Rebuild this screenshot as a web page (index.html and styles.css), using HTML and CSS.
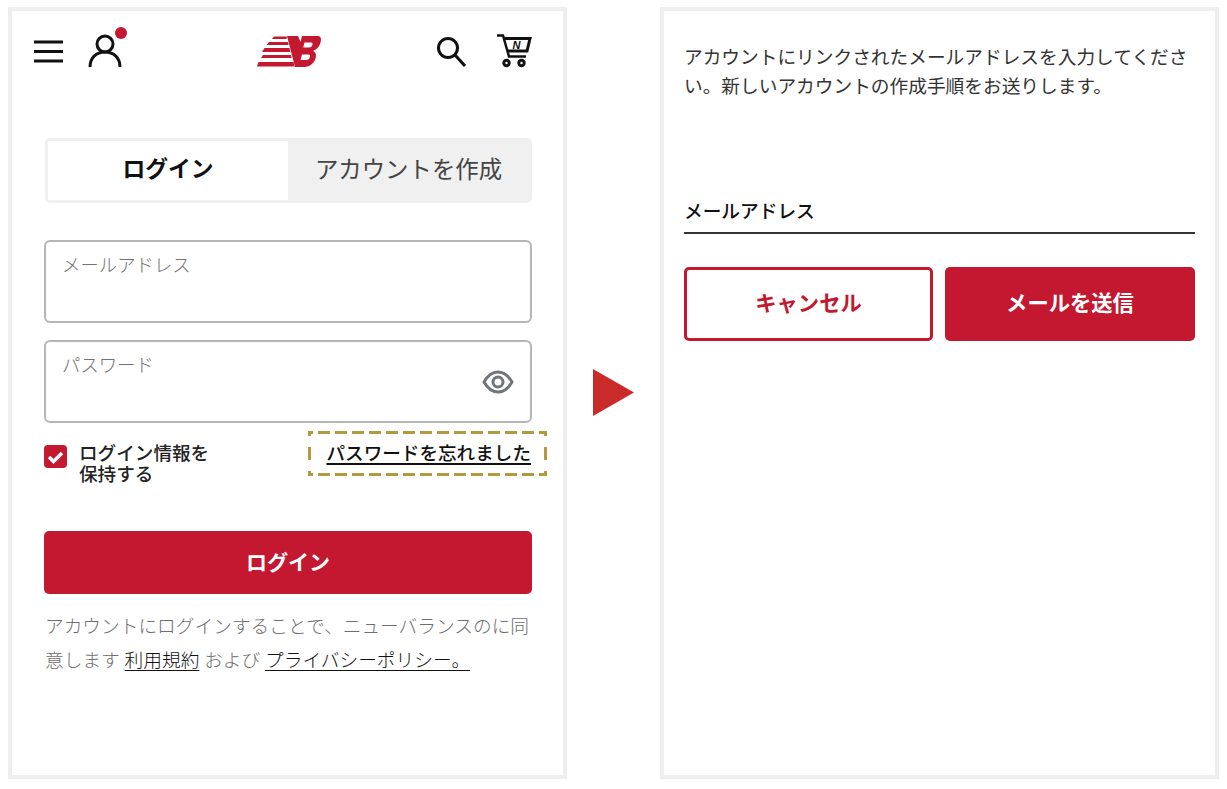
FILE: index.html
```html
<!DOCTYPE html>
<html lang="ja">
<head>
    <meta charset="UTF-8">
    <meta name="viewport" content="width=device-width, initial-scale=1.0">
    <title>パスワードを忘れました</title>
    <link rel="stylesheet" href="styles.css">
</head>
<body>
    <div class="page">
        <section class="panel panel-login">
            <header class="top">
                <div class="top-left">
                    <svg class="ico-menu" width="29" height="24" viewBox="0 0 29 24"><path d="M0 3h29M0 12.500h29M0 22h29" stroke="#111" stroke-width="3" fill="none"/></svg>
                    <span class="user">
                        <svg width="34" height="34" viewBox="0 0 34 34" fill="none" stroke="#111" stroke-width="3"><circle cx="17" cy="10" r="8"/><path d="M2 33c0-9 6-15 15-15s15 6 15 15"/></svg>
                        <span class="user-dot"></span>
                    </span>
                </div>
                <svg class="logo" width="64" height="31" viewBox="0 0 64 31">
                    <g fill="#c41730">
                        <path d="M17 .500h13l-.500 2.500H15zM12 6h19l.700 3H9.500zM7.500 12h25l.700 4H5zM6 19h28l.700 3H4zM1.500 26h35l1 4.500H0z"/>
                        <path d="M30 0h11l2.500 6L45 0h16c3 0 3.500 3 2.500 6.500-1 4-3.500 7-7.500 8.500 3 1 3.500 4 2.500 7.500-2 6-6.500 8.500-12.500 8.500H38z"/>
                    </g>
                    <path fill="#fff" d="M47.500 6.500h6.500c1.500 0 1.800 1 1.400 2.500-.5 1.500-1.500 2.500-3.500 2.500h-5.700zM45 18.500h6.500c1.500 0 1.800 1 1.400 2.500-.5 1.800-1.700 3-3.700 3h-5.700z"/>
                </svg>
                <div class="top-right">
                    <svg width="29" height="31" viewBox="0 0 29 31" fill="none" stroke="#111" stroke-width="3"><circle cx="11" cy="12" r="9.500"/><path d="M18 19l10 11"/></svg>
                    <svg width="35" height="34" viewBox="0 0 35 34" fill="none" stroke="#111">
                        <path stroke-width="2.500" d="M0 1.500h6l6 21h17"/>
                        <path stroke-width="3" d="M6 4.500h27l-3 12.500H11"/>
                        <text class="cart-n" x="19.500" y="14.500" text-anchor="middle">N</text>
                        <circle stroke-width="3" cx="9.500" cy="29" r="2.700"/>
                        <circle stroke-width="3" cx="24.500" cy="29" r="2.700"/>
                    </svg>
                </div>
            </header>

            <div class="tabs">
                <div class="tab active">ログイン</div>
                <div class="tab">アカウントを作成</div>
            </div>

            <div class="field">メールアドレス</div>
            <div class="field field-pass">
                パスワード
                <svg class="eye" width="32" height="26" viewBox="0 0 32 26" fill="none" stroke="#6f7579" stroke-width="3"><path d="M2 13C6 6 11 3 16 3s10 3 14 10c-4 7-9 10-14 10S6 20 2 13z"/><circle cx="16" cy="13" r="5"/></svg>
            </div>

            <div class="options">
                <label class="remember">
                    <span class="check">
                        <svg width="17" height="14" viewBox="0 0 17 14" fill="none" stroke="#fff" stroke-width="3.500"><path d="M2 7l4.500 4.500L15 3"/></svg>
                    </span>
                    <span class="remember-text">ログイン情報を保持する</span>
                </label>
                <a class="forgot" href="#">パスワードを忘れました</a>
            </div>

            <button class="btn btn-login" type="button">ログイン</button>

            <p class="terms">アカウントにログインすることで、ニューバランスのに同<br>意します <a href="#">利用規約</a> および <a href="#">プライバシーポリシー。</a></p>
        </section>

        <div class="arrow"></div>

        <section class="panel panel-mail">
            <p class="intro">アカウントにリンクされたメールアドレスを入力してください。新しいアカウントの作成手順をお送りします。</p>
            <div class="mail-label">メールアドレス</div>
            <div class="actions">
                <button class="btn btn-outline" type="button">キャンセル</button>
                <button class="btn btn-send" type="button">メールを送信</button>
            </div>
        </section>
    </div>
</body>
</html>
```

FILE: styles.css
```css
* {
    box-sizing: border-box;
}

body {
    margin: 0;
    background: #fff;
    color: #111;
    font-family: "Noto Sans CJK JP", "Noto Sans", sans-serif;
}

a {
    color: #111;
}

.page {
    display: flex;
    align-items: flex-start;
    padding: 7px 8px 0 8px;
}

.panel {
    height: 772px;
    border: 4px solid #eeeeee;
}

.panel-login {
    width: 559px;
    padding: 0 31px 0 32px;
}

.panel-mail {
    width: 559px;
    padding: 31px 20px 0 20px;
}

.top {
    display: flex;
    align-items: center;
    height: 76px;
    margin: 0 0 51px -10px;
    padding-top: 4px;
}

.top-left {
    display: flex;
    align-items: center;
    gap: 25px;
    width: 223px;
}

.top-right {
    display: flex;
    align-items: center;
    gap: 31px;
    margin-left: auto;
}

.cart-n {
    font-family: "Liberation Sans", sans-serif;
    font-size: 11px;
    font-style: italic;
    font-weight: 700;
    fill: #111;
    stroke: none;
}

.user {
    position: relative;
    display: flex;
}

.user-dot {
    position: absolute;
    top: -7px;
    right: -5px;
    width: 12px;
    height: 12px;
    border-radius: 50%;
    background: #c41730;
}

.tabs {
    display: flex;
    height: 65px;
    margin-left: 1px;
    border: 3px solid #f0f0f0;
    border-radius: 5px;
    font-size: 23.400px;
}

.tab {
    flex: 1;
    display: flex;
    align-items: center;
    justify-content: center;
    padding-bottom: 6px;
    background: #f0f0f0;
    color: #444;
}

.tab.active {
    flex: none;
    width: 240px;
    background: #fff;
    color: #111;
    font-size: 22.800px;
    font-weight: 700;
}

.field {
    position: relative;
    height: 83px;
    margin-top: 37px;
    padding: 9px 16px;
    border: 2px solid #b4b6b9;
    border-radius: 6px;
    font-size: 18.400px;
    font-weight: 300;
    color: #737373;
}

.field-pass {
    margin-top: 17px;
}

.eye {
    position: absolute;
    right: 16px;
    top: 27px;
}

.options {
    display: flex;
    align-items: flex-start;
    justify-content: space-between;
    margin-top: 8px;
    font-size: 18.600px;
    font-weight: 500;
    line-height: 21px;
    color: #222;
}

.remember {
    display: flex;
    align-items: flex-start;
    gap: 12px;
    padding-top: 10px;
}

.remember-text {
    width: 135px;
}

.check {
    display: flex;
    align-items: center;
    justify-content: center;
    width: 23px;
    height: 23px;
    margin-top: 4px;
    border-radius: 4px;
    background: #c41730;
}

/* long dashes: a plain dashed border comes out too short */
.forgot {
    margin-right: -15px;
    padding: 10px 16px 14px 18px;
    background-image:
        linear-gradient(90deg, #b39a3e 12px, transparent 12px),
        linear-gradient(90deg, #b39a3e 12px, transparent 12px),
        linear-gradient(#b39a3e 5px, transparent 5px 16px, #b39a3e 16px 29px, transparent 29px 40px, #b39a3e 40px),
        linear-gradient(#b39a3e 5px, transparent 5px 16px, #b39a3e 16px 29px, transparent 29px 40px, #b39a3e 40px);
    background-size: 17px 3px, 17px 3px, 3px 100%, 3px 100%;
    background-position: -7px 0, -7px 100%, 0 0, 100% 0;
    background-repeat: repeat-x, repeat-x, no-repeat, no-repeat;
    text-decoration-thickness: 2px;
    text-underline-offset: 3px;
}

.btn {
    display: block;
    width: 100%;
    height: 63px;
    padding: 0 0 4px;
    border: 0;
    border-radius: 5px;
    background: #c41730;
    color: #fff;
    font-family: inherit;
    font-size: 21px;
    font-weight: 700;
}

.btn-login {
    margin-top: 48px;
}

.terms {
    margin: 14px 0 0 1px;
    font-size: 18.700px;
    font-weight: 300;
    line-height: 34px;
    word-spacing: 0.700px;
    white-space: nowrap;
    color: #6e6e6e;
}

.terms a {
    text-underline-offset: 3px;
}

.arrow {
    flex: none;
    width: 41px;
    height: 47px;
    margin: 362px 26px 0 26px;
    background: #c92a2a;
    clip-path: polygon(0 0, 100% 50%, 0 100%);
}

.intro {
    margin: 0;
    font-size: 18.700px;
    line-height: 28.500px;
    color: #333;
}

.mail-label {
    margin-top: 97px;
    padding-bottom: 9px;
    border-bottom: 2px solid #333;
    font-size: 18.700px;
    font-weight: 500;
}

.actions {
    display: flex;
    gap: 12px;
    margin-top: 33px;
}

.actions .btn {
    flex: none;
    height: 74px;
    padding-bottom: 6px;
    font-size: 21.300px;
}

.actions .btn-outline {
    width: 249px;
    border: 3px solid #c41730;
    background: #fff;
    color: #c41730;
}

.actions .btn-send {
    width: 250px;
}
```
